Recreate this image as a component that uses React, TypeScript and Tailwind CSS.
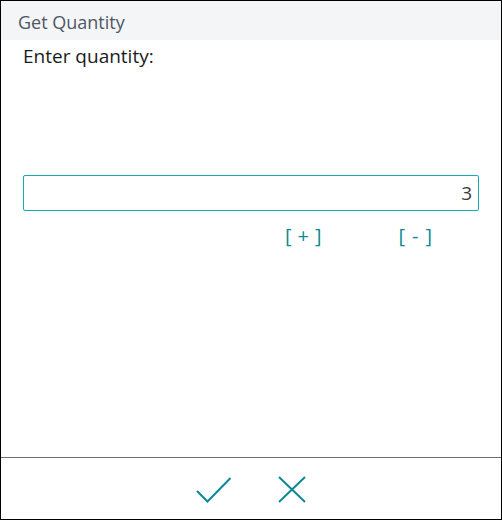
import React from "react";

export default function App() {
  const font = { fontFamily: '"Open Sans", "Noto Sans", sans-serif' };
  return (
    <div
      className="w-[502px] h-[520px] border border-black bg-white flex flex-col"
      style={font}
    >
      <div className="h-[39px] bg-[#f4f5f7] flex items-center pl-[17px] pt-[2px]">
        <span className="text-[18px] text-[#4f5763] leading-none">Get Quantity</span>
      </div>
      <div className="flex-1 flex flex-col px-[22px]">
        <div className="text-[19px] text-[#1b1b1b] leading-none mt-[7px]">Enter quantity:</div>
        <div className="mt-[109px] h-[36px] border border-[#16a9b6] rounded-[2px] flex items-center justify-end pr-[6px]">
          <span className="text-[19px] text-[#3a3a3a] leading-none">3</span>
        </div>
        <div className="flex mt-[15px] text-[20px] font-normal text-[#0b8a95] leading-none">
          <span className="ml-[262px] flex gap-[6px]">
            <span>[</span>
            <span>+</span>
            <span>]</span>
          </span>
          <span className="ml-[77px] flex gap-[7px]">
            <span>[</span>
            <span>-</span>
            <span>]</span>
          </span>
        </div>
      </div>
      <div className="h-[62px] border-t border-[#6e6e6e] flex items-center justify-center gap-[46px] pt-[2px]">
        <svg width="36" height="26" viewBox="0 0 36 26">
          <path d="M1 14 L11.5 24.5 L34.5 1" fill="none" stroke="#0b8a95" strokeWidth="2" />
        </svg>
        <svg width="28" height="27" viewBox="0 0 28 27">
          <path d="M1 1 L27 26 M27 1 L1 26" fill="none" stroke="#0b8a95" strokeWidth="2" />
        </svg>
      </div>
    </div>
  );
}
